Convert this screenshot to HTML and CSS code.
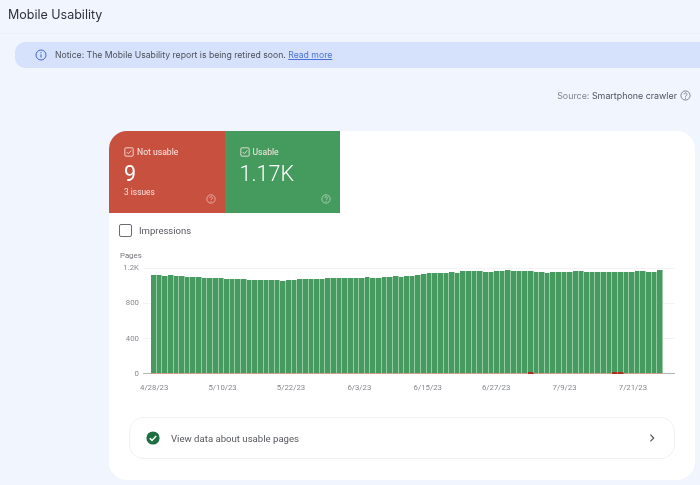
FILE: index.html
```html
<!DOCTYPE html>
<html lang="en">
<head>
<meta charset="utf-8">
<title>Mobile Usability</title>
<link rel="stylesheet" href="styles.css">
</head>
<body>
<svg class="defs" width="0" height="0" aria-hidden="true">
  <symbol id="help" viewBox="0 0 12 12">
    <circle cx="6" cy="6" r="5" fill="none" stroke="currentColor" stroke-width="1"/>
    <path d="M4.4 4.8a1.6 1.6 0 1 1 2.5 1.3c-.6.4-.9.7-.9 1.3" fill="none" stroke="currentColor" stroke-width="1"/>
    <circle cx="6" cy="8.9" r=".6" fill="currentColor"/>
  </symbol>
  <symbol id="checked" viewBox="0 0 12 12">
    <rect x="1" y="1" width="10" height="10" rx="1.2" fill="none" stroke="currentColor" stroke-width="1"/>
    <path d="M3.3 6.1l1.9 1.9 3.6-3.8" fill="none" stroke="currentColor" stroke-width="1"/>
  </symbol>
</svg>
<header class="title-bar"><h1 class="title">Mobile Usability</h1></header>
<div class="notice">
  <svg class="notice-icon" viewBox="0 0 12 12" aria-hidden="true">
    <circle cx="6" cy="6" r="5" fill="none" stroke="currentColor" stroke-width="1"/>
    <path d="M6 5.3v3.3" stroke="currentColor" stroke-width="1"/>
    <circle cx="6" cy="3.7" r=".6" fill="currentColor"/>
  </svg>
  <span>Notice: The Mobile Usability report is being retired soon. <a class="link" href="#">Read more</a></span>
</div>
<div class="source"><span class="source-key">Source:</span>&nbsp;Smartphone crawler <svg class="source-help"><use href="#help"/></svg></div>
<main class="card">
  <div class="tiles">
    <section class="tile tile-red">
      <div class="tile-label"><svg class="tile-check"><use href="#checked"/></svg>Not usable</div>
      <div class="tile-value">9</div>
      <div class="tile-sub">3 issues</div>
      <svg class="tile-help"><use href="#help"/></svg>
    </section>
    <section class="tile tile-green">
      <div class="tile-label"><svg class="tile-check"><use href="#checked"/></svg>Usable</div>
      <div class="tile-value">1.17K</div>
      <svg class="tile-help"><use href="#help"/></svg>
    </section>
  </div>
  <label class="toggle"><span class="box"></span>Impressions</label>
  <div class="chart">
    <div class="axis-title">Pages</div>
    <div class="chart-body">
      <div class="y-labels"><span>1.2K</span><span>800</span><span>400</span><span>0</span></div>
      <div class="plot">
        <div class="grid"><i></i><i></i><i></i><i></i></div>
        <div class="bars">
<i style="height:98.7px"></i><i style="height:98.7px"></i><i style="height:98.3px"></i><i style="height:98.7px"></i><i style="height:98px"></i><i style="height:97.7px"></i><i style="height:97.3px"></i><i style="height:97.3px"></i><i style="height:96.7px"></i><i style="height:96.3px"></i><i style="height:96.3px"></i><i style="height:96.3px"></i><i style="height:96.3px"></i><i style="height:94.7px"></i><i style="height:94.7px"></i><i style="height:95px"></i><i style="height:94.7px"></i><i style="height:94px"></i><i style="height:94px"></i><i style="height:94px"></i><i style="height:94px"></i><i style="height:93.7px"></i><i style="height:93.7px"></i><i style="height:93px"></i><i style="height:94.3px"></i><i style="height:94.3px"></i><i style="height:95px"></i><i style="height:95px"></i><i style="height:95px"></i><i style="height:95px"></i><i style="height:95.3px"></i><i style="height:95.7px"></i><i style="height:95.7px"></i><i style="height:95.7px"></i><i style="height:96.3px"></i><i style="height:96.3px"></i><i style="height:96.3px"></i><i style="height:95.7px"></i><i style="height:97px"></i><i style="height:96.3px"></i><i style="height:96.3px"></i><i style="height:97.3px"></i><i style="height:97.3px"></i><i style="height:98px"></i><i style="height:97.3px"></i><i style="height:98px"></i><i style="height:98.3px"></i><i style="height:99px"></i><i style="height:100px"></i><i style="height:101.3px"></i><i style="height:101.3px"></i><i style="height:101.3px"></i><i style="height:101.3px"></i><i style="height:102px"></i><i style="height:100.7px"></i><i style="height:103px"></i><i style="height:102.7px"></i><i style="height:102.7px"></i><i style="height:102.7px"></i><i style="height:102px"></i><i style="height:102px"></i><i style="height:103px"></i><i style="height:103.3px"></i><i style="height:104px"></i><i style="height:103.3px"></i><i style="height:103.3px"></i><i style="height:103.3px"></i><i class="err" style="height:103.3px"></i><i style="height:102px"></i><i style="height:101.7px"></i><i style="height:101.3px"></i><i style="height:102px"></i><i style="height:102.3px"></i><i style="height:102px"></i><i style="height:102.3px"></i><i style="height:103.3px"></i><i style="height:102.7px"></i><i style="height:102px"></i><i style="height:101.7px"></i><i style="height:102px"></i><i style="height:102px"></i><i style="height:102px"></i><i class="err" style="height:102px"></i><i class="err" style="height:102px"></i><i style="height:102px"></i><i style="height:102.3px"></i><i style="height:102.7px"></i><i style="height:102.7px"></i><i style="height:102.3px"></i><i style="height:102px"></i><i style="height:104.3px"></i>
        </div>
      </div>
    </div>
    <div class="x-labels"><span>4/28/23</span><span>5/10/23</span><span>5/22/23</span><span>6/3/23</span><span>6/15/23</span><span>6/27/23</span><span>7/9/23</span><span>7/21/23</span></div>
  </div>
  <a class="row" href="#">
    <svg class="row-check" viewBox="0 0 14 14" aria-hidden="true">
      <circle cx="7" cy="7" r="6.6" fill="#1f6e3f"/>
      <path d="M3.8 7.2l2.2 2.2 4.2-4.4" fill="none" stroke="#fff" stroke-width="1.5"/>
    </svg>
    <span class="row-text">View data about usable pages</span>
    <svg class="row-chevron" viewBox="0 0 8 10" aria-hidden="true"><path d="M2.4 1.7l3.3 3.3-3.3 3.3" fill="none" stroke="currentColor" stroke-width="1.2"/></svg>
  </a>
</main>
</body>
</html>
```
FILE: styles.css
```css
* { box-sizing: border-box; }
html, body { margin: 0; height: 100%; }
body {
  width: 700px;
  height: 485px;
  overflow: hidden;
  background: #f1f5fe;
  color: #3c4043;
  font-family: Inter, "Liberation Sans", sans-serif;
  filter: blur(0.45px);
}
.defs { position: absolute; }
.title-bar {
  height: 34px;
  padding: 6px 0 0 8px;
  border-bottom: 1px solid #eef0f6;
}
.title { margin: 0; font-size: 12.5px; line-height: 18px; font-weight: 400; color: #2f3136; }
.notice {
  display: flex;
  align-items: center;
  gap: 8px;
  height: 25.5px;
  margin: 8px 0 0 15px;
  padding-left: 20px;
  background: #d6e2fb;
  border-radius: 10px 0 0 10px;
  font-size: 8.67px;
  color: #4a4e57;
}
.notice-icon { width: 12px; height: 12px; color: #3f68c8; flex: none; }
.link { color: #4a72d6; text-decoration: underline; }
.source {
  display: flex;
  justify-content: flex-end;
  align-items: center;
  margin-top: 21px;
  padding-right: 9px;
  height: 14px;
  font-size: 8.9px;
  color: #4e5157;
}
.source-key { color: #80848b; }
.source-help { width: 11px; height: 11px; margin-left: 3px; color: #77797e; }
.card {
  width: 586px;
  height: 349px;
  margin: 28.5px 0 0 109px;
  background: #fff;
  border-radius: 18px;
  overflow: hidden;
}
.tiles { display: flex; }
.tile {
  position: relative;
  width: 115.5px;
  height: 82px;
  padding: 15px 0 0 15px;
  color: #fff;
}
.tile-red { background: #c8503f; }
.tile-green { background: #459a5e; }
.tile-label { display: flex; align-items: center; gap: 3px; font-family: Roboto, sans-serif; font-size: 8.6px; line-height: 12px; color: #fbe9e5; }
.tile-check { width: 10px; height: 10px; }
.tile-value { font-family: Roboto, sans-serif; font-size: 21.5px; line-height: 26px; margin-top: 3px; font-weight: 400; }
.tile-green .tile-value { font-weight: 300; }
.tile-sub { font-family: Roboto, sans-serif; font-size: 8.4px; line-height: 12px; margin-top: -1px; color: #fbe1dc; }
.tile-help { position: absolute; right: 9px; bottom: 9px; width: 10px; height: 10px; opacity: .6; }
.toggle {
  display: flex;
  align-items: center;
  gap: 7px;
  height: 34px;
  padding: 0 0 0 10px;
  font-family: Roboto, sans-serif;
  font-size: 9.5px;
  color: #55585d;
}
.box { width: 13px; height: 13px; border: 1.3px solid #6a6d72; border-radius: 2px; }
.chart { padding-left: 11px; font-family: Roboto, sans-serif; color: #85888d; font-size: 7.8px; }
.axis-title { height: 12px; margin-top: 3px; line-height: 12px; color: #6f7277; }
.chart-body { display: flex; margin-top: 6px; height: 106px; }
.y-labels {
  width: 19px;
  margin-block: -6px;
  display: flex;
  flex-direction: column;
  justify-content: space-between;
  align-items: flex-end;
  line-height: 12px;
}
.plot { position: relative; width: 532px; margin-left: 4px; }
.grid {
  position: absolute;
  inset: 0;
  display: flex;
  flex-direction: column;
  justify-content: space-between;
}
.grid i { display: block; height: 1px; background: #f1f2f4; }
.grid i:last-child { background: #b9b7b5; }
.bars {
  position: absolute;
  left: 8px;
  bottom: 0;
  width: 512.5px;
  height: 106px;
  display: flex;
  align-items: flex-end;
}
.bars i {
  display: block;
  flex: 1 1 0;
  background: #479b60;
  border-right: 1px solid #97cba6;
  border-bottom: 1px solid #d49a86;
}
.bars i.err { border-bottom: 2px solid #a8321f; }
.x-labels { display: flex; margin: 8px 0 0 0; line-height: 12px; }
.x-labels span { width: 68.4px; text-align: center; }
.row {
  display: flex;
  align-items: center;
  width: 546px;
  height: 42px;
  margin: 23px 0 0 20px;
  padding: 0 18px 0 16px;
  border: 1px solid #f0f1f4;
  border-radius: 14px;
  color: #55585d;
  text-decoration: none;
  font-family: Roboto, sans-serif;
  font-size: 9.6px;
}
.row-check { width: 14px; height: 14px; flex: none; }
.row-text { margin-left: 11px; flex: 1; }
.row-chevron { width: 8px; height: 10px; color: #55585d; }
```
